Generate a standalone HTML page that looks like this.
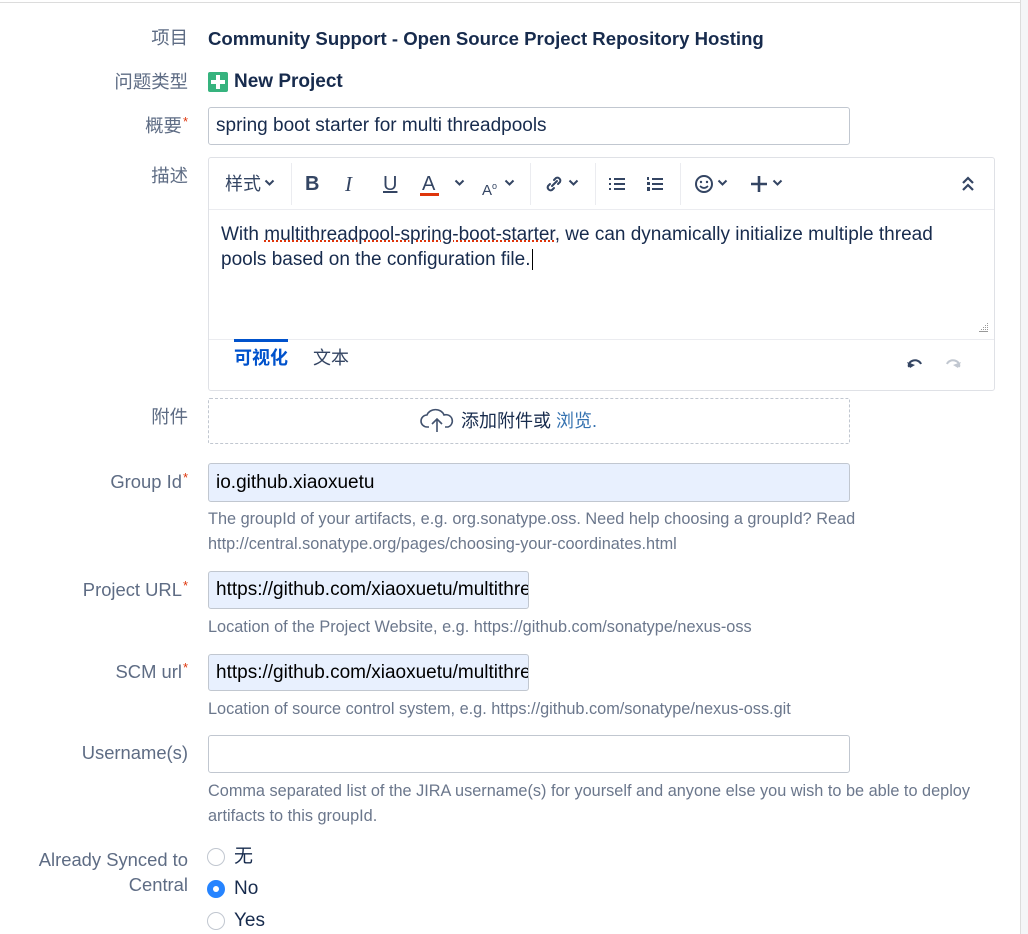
<!DOCTYPE html>
<html><head><meta charset="utf-8"><style>
*{box-sizing:border-box;margin:0;padding:0}
body{width:1028px;height:934px;background:#fff;position:relative;overflow:hidden;font-family:"Liberation Sans","Noto Sans CJK SC",sans-serif;color:#172b4d}
.a{position:absolute;white-space:nowrap}
.lbl{position:absolute;right:840px;font-size:18.4px;color:#5e6c84;line-height:20px;text-align:right;white-space:nowrap}
.req{color:#de350b;font-size:13px;vertical-align:top;position:relative;top:-4px;margin-left:1px}
.inp{position:absolute;left:208px;border:1px solid #c1c7d0;border-radius:3px;font-size:19px;padding-left:7px;display:flex;align-items:center;overflow:hidden;white-space:nowrap;color:#000}
.fill{background:#e8f0fe}
.help{position:absolute;left:208px;font-size:16.3px;color:#6b778c;line-height:25px}
.tb{position:absolute;top:173px;font-size:20px;color:#344563;line-height:22px}
.sep{position:absolute;top:163px;width:1px;height:42px;background:#ebecf0}
.radio{position:absolute;left:207px;width:18px;height:18px;border-radius:50%;border:1px solid #c1c7d0;background:#fff}
.rl{position:absolute;left:234px;font-size:19px;line-height:20px;color:#172b4d}
.cv{position:absolute;top:179px}
</style></head><body>
<div class="a" style="left:0;top:2px;width:1020px;height:1px;background:#dcdcdc"></div>
<div class="a" style="left:1020px;top:0;width:1px;height:934px;background:#dcdcdc"></div>
<div class="a" style="left:1021px;top:0;width:7px;height:934px;background:#f4f5f7"></div>

<div class="lbl" style="top:28px">项目</div>
<div class="a" style="left:208px;top:28px;font-size:18.6px;font-weight:bold;line-height:22px">Community Support - Open Source Project Repository Hosting</div>

<div class="lbl" style="top:72px">问题类型</div>
<div class="a" style="left:208px;top:72px;width:20px;height:20px;background:#36b37e;border-radius:2px"></div>
<div class="a" style="left:216px;top:75px;width:4px;height:14px;background:#fff"></div>
<div class="a" style="left:211px;top:80px;width:14px;height:4px;background:#fff"></div>
<div class="a" style="left:234px;top:71px;font-size:19px;font-weight:bold;line-height:22px">New Project</div>

<div class="lbl" style="top:116px">概要<span class="req">*</span></div>
<div class="inp" style="top:107px;width:642px;height:38px;color:#172b4d">spring boot starter for multi threadpools</div>

<div class="lbl" style="top:166px">描述</div>
<div class="a" style="left:208px;top:157px;width:787px;height:234px;border:1px solid #dfe1e6;border-radius:3px"></div>
<div class="a" style="left:209px;top:209px;width:785px;height:1px;background:#ebecf0"></div>
<div class="a" style="left:209px;top:339px;width:785px;height:1px;background:#ebecf0"></div>
<div class="tb" style="left:225px;font-size:18px">样式</div>
<svg class="cv" style="left:264px" width="11" height="8"><path d="M1.5 1.5l4 4 4-4" stroke="#344563" stroke-width="2" fill="none"/></svg>
<div class="sep" style="left:291px"></div>
<div class="tb" style="left:305px;font-weight:bold">B</div>
<div class="tb" style="left:345px;font-style:italic;font-family:'Liberation Serif',serif;font-size:21px">I</div>
<div class="tb" style="left:383px;text-decoration:underline">U</div>
<div class="tb" style="left:422px">A</div>
<div class="a" style="left:420px;top:193px;width:19px;height:3px;background:#de350b"></div>
<svg class="cv" style="left:454px" width="11" height="8"><path d="M1.5 1.5l4 4 4-4" stroke="#344563" stroke-width="2" fill="none"/></svg>
<div class="tb" style="left:482px;font-size:15px;top:175px">A<sup style="font-size:9px">o</sup></div>
<svg class="cv" style="left:504px" width="11" height="8"><path d="M1.5 1.5l4 4 4-4" stroke="#344563" stroke-width="2" fill="none"/></svg>
<div class="sep" style="left:530px"></div>
<svg class="a" style="left:544px;top:175px" width="20" height="18" viewBox="0 0 20 18"><path d="M8 11l5-5M6 9l-2 2a3 3 0 004 4l2-2M14 9l2-2a3 3 0 00-4-4l-2 2" stroke="#344563" stroke-width="2" fill="none" stroke-linecap="round"/></svg>
<svg class="cv" style="left:568px" width="11" height="8"><path d="M1.5 1.5l4 4 4-4" stroke="#344563" stroke-width="2" fill="none"/></svg>
<div class="sep" style="left:595px"></div>
<svg class="a" style="left:608px;top:175px" width="20" height="18"><g fill="#344563"><rect x="1" y="3" width="2" height="2"/><rect x="1" y="8" width="2" height="2"/><rect x="1" y="13" width="2" height="2"/><rect x="6" y="3" width="11" height="2"/><rect x="6" y="8" width="11" height="2"/><rect x="6" y="13" width="11" height="2"/></g></svg>
<svg class="a" style="left:646px;top:175px" width="20" height="18"><g fill="#344563"><rect x="1" y="2" width="2" height="3"/><rect x="1" y="7" width="3" height="3"/><rect x="1" y="12" width="3" height="4"/><rect x="6" y="3" width="11" height="2"/><rect x="6" y="8" width="11" height="2"/><rect x="6" y="13" width="11" height="2"/></g></svg>
<div class="sep" style="left:680px"></div>
<svg class="a" style="left:694px;top:174px" width="20" height="20"><circle cx="10" cy="10" r="8" stroke="#344563" stroke-width="2" fill="none"/><circle cx="7" cy="8" r="1.2" fill="#344563"/><circle cx="13" cy="8" r="1.2" fill="#344563"/><path d="M6 12q4 4 8 0" stroke="#344563" stroke-width="1.6" fill="none"/></svg>
<svg class="cv" style="left:717px" width="11" height="8"><path d="M1.5 1.5l4 4 4-4" stroke="#344563" stroke-width="2" fill="none"/></svg>
<svg class="a" style="left:750px;top:175px" width="18" height="18"><path d="M9 1v16M1 9h16" stroke="#344563" stroke-width="2.6"/></svg>
<svg class="cv" style="left:772px" width="11" height="8"><path d="M1.5 1.5l4 4 4-4" stroke="#344563" stroke-width="2" fill="none"/></svg>
<svg class="a" style="left:961px;top:176px" width="14" height="16"><path d="M2 7l5-5 5 5M2 14l5-5 5 5" stroke="#344563" stroke-width="2.2" fill="none"/></svg>

<div class="a" style="left:221px;top:222px;font-size:19px;line-height:25px;color:#172b4d">With <span style="text-decoration:underline dotted #de350b">multithreadpool-spring-boot-starter</span>, we can dynamically initialize multiple thread<br>pools based on the configuration file.<span style="border-left:1px solid #000;margin-left:1px"></span></div>
<svg class="a" style="left:978px;top:322px" width="12" height="12"><g fill="#999"><rect x="9" y="1" width="1" height="1"/><rect x="7" y="3" width="1" height="1"/><rect x="9" y="3" width="1" height="1"/><rect x="5" y="5" width="1" height="1"/><rect x="7" y="5" width="1" height="1"/><rect x="9" y="5" width="1" height="1"/><rect x="3" y="7" width="1" height="1"/><rect x="5" y="7" width="1" height="1"/><rect x="7" y="7" width="1" height="1"/><rect x="9" y="7" width="1" height="1"/><rect x="1" y="9" width="9" height="1"/></g></svg>

<div class="a" style="left:234px;top:339px;width:54px;height:3px;background:#0052cc"></div>
<div class="a" style="left:234px;top:347px;font-size:18px;font-weight:bold;color:#0052cc;line-height:22px">可视化</div>
<div class="a" style="left:313px;top:347px;font-size:18px;color:#344563;line-height:22px">文本</div>
<svg class="a" style="left:905px;top:356px" width="20" height="14"><path d="M4 11a6 5 0 0112-3" stroke="#344563" stroke-width="2" fill="none"/><path d="M2 6l3 6 5-3z" fill="#344563"/></svg>
<svg class="a" style="left:943px;top:356px" width="20" height="14"><path d="M16 11a6 5 0 00-12-3" stroke="#c1c7d0" stroke-width="2" fill="none"/><path d="M18 6l-3 6-5-3z" fill="#c1c7d0"/></svg>

<div class="lbl" style="top:407px">附件</div>
<div class="a" style="left:208px;top:398px;width:642px;height:46px;border:1px dashed #c1c7d0;border-radius:2px"></div>
<svg class="a" style="left:420px;top:407px" width="34" height="28"><path d="M9 20H7a6 6 0 010-12 9 8 0 0117 0 5 5 0 014 12h-3" stroke="#42526e" stroke-width="1.6" fill="none"/><path d="M17 25V13M12 17l5-5 5 5" stroke="#42526e" stroke-width="1.6" fill="none"/></svg>
<div class="a" style="left:461px;top:410px;font-size:18px;line-height:22px;color:#172b4d">添加附件或 <span style="color:#3572b0">浏览.</span></div>

<div class="lbl" style="top:472px">Group Id<span class="req">*</span></div>
<div class="inp fill" style="top:463px;width:642px;height:39px">io.github.xiaoxuetu</div>
<div class="help" style="top:507px">The groupId of your artifacts, e.g. org.sonatype.oss. Need help choosing a groupId? Read<br>http://central.sonatype.org/pages/choosing-your-coordinates.html</div>

<div class="lbl" style="top:580px">Project URL<span class="req">*</span></div>
<div class="inp fill" style="top:571px;width:321px;height:38px">https://github.com/xiaoxuetu/multithreadpool</div>
<div class="help" style="top:615px">Location of the Project Website, e.g. https://github.com/sonatype/nexus-oss</div>

<div class="lbl" style="top:662px">SCM url<span class="req">*</span></div>
<div class="inp fill" style="top:654px;width:321px;height:37px">https://github.com/xiaoxuetu/multithreadpool</div>
<div class="help" style="top:697px">Location of source control system, e.g. https://github.com/sonatype/nexus-oss.git</div>

<div class="lbl" style="top:743px">Username(s)</div>
<div class="inp" style="top:735px;width:642px;height:38px"></div>
<div class="help" style="top:779px">Comma separated list of the JIRA username(s) for yourself and anyone else you wish to be able to deploy<br>artifacts to this groupId.</div>

<div class="lbl" style="top:847px;line-height:25px">Already Synced to<br>Central</div>
<div class="radio" style="top:848px"></div>
<div class="rl" style="top:847px">无</div>
<div class="radio" style="top:880px;background:#2684ff;border-color:#2684ff"></div>
<div class="a" style="left:213px;top:886px;width:6px;height:6px;border-radius:50%;background:#fff"></div>
<div class="rl" style="top:879px">No</div>
<div class="radio" style="top:912px"></div>
<div class="rl" style="top:911px">Yes</div>
</body></html>
